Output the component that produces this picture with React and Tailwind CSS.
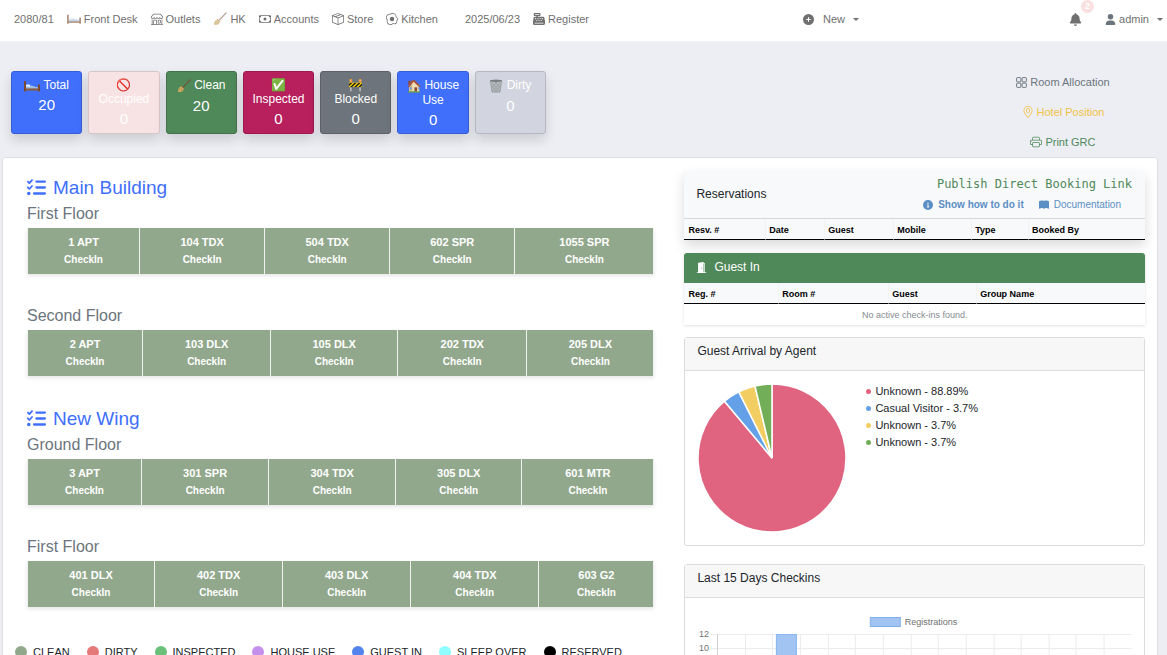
import {
  BsBookFill,
  BsBoxSeam,
  BsCash,
  BsDoorOpenFill,
  BsEggFried,
  BsGeoAlt,
  BsPrinter,
  BsShop,
} from 'react-icons/bs'
import { FaBell, FaCashRegister, FaCircleInfo, FaCirclePlus, FaListCheck, FaUser } from 'react-icons/fa6'

function BedIcon({ className }) {
  return (
    <svg viewBox="0 0 32 24" className={className} aria-hidden="true">
      <path d="M4 11h10l14 4v3H4z" fill="#a9c8ea" />
      <path d="M4 10q5-3 8 0v3H4z" fill="#e6ebf1" />
      <path d="M3 15h26v3H3z" fill="#8fb1d8" />
      <path d="M2 17h28v4H2z" fill="#8a5a3c" />
      <path d="M0 2h4v21H0zM28 9h4v14h-4z" fill="#7b4a33" />
    </svg>
  )
}

function BroomIcon({ className }) {
  return (
    <svg viewBox="0 0 32 32" className={className} aria-hidden="true">
      <path d="M30 2 15 18" stroke="#7a5136" strokeWidth="2.4" strokeLinecap="round" />
      <path d="m10 16 6 6-3 6q-5 3-11 1 0-6 3-9z" fill="#d3b064" />
      <path d="m7 20-3 7M11 21l-3 7M13 24l-2 4" stroke="#94703a" strokeWidth="1.1" />
      <path d="m10 16 6 6" stroke="#8a5a2c" strokeWidth="2" />
    </svg>
  )
}

function HouseIcon({ className }) {
  return (
    <svg viewBox="0 0 32 32" className={className} aria-hidden="true">
      <path d="M3 4h5v9H3z" fill="#8f4a35" />
      <path d="M5 14 12 4l16 9v16H5z" fill="#f1dfb8" />
      <path d="M5 14v15h7V8z" fill="#d9bd8b" />
      <path d="M2 17 12 2l6 1 13 14-3 2-13-13L5 19z" fill="#a5533c" />
      <path d="M17 19h6v10h-6z" fill="#8a4b2d" />
      <path d="M7 19h4v5H7zM25 19h2v5h-2z" fill="#5f9bd0" />
      <path d="M2 28h28v3H2z" fill="#6aa247" />
    </svg>
  )
}

function TrashIcon({ className }) {
  return (
    <svg viewBox="0 0 32 32" className={className} aria-hidden="true">
      <path d="M3 4h26l-4 26H7z" fill="#b6babd" />
      <path
        d="m6 8 18 20M5 15l13 14M12 5l14 15M26 8 8 28M27 15 14 29M20 5 6 20"
        stroke="#878d91"
        strokeWidth="1.2"
      />
      <path d="M3 4h26l-4 26H7z" fill="none" stroke="#8d9397" strokeWidth="1.6" />
      <ellipse cx="16" cy="4" rx="14" ry="2.6" fill="#777d81" />
    </svg>
  )
}

// four rounded squares, used for the allocation link
function GridIcon({ className }) {
  return (
    <svg viewBox="0 0 16 16" className={className} fill="none" stroke="currentColor" strokeWidth="1.4" aria-hidden="true">
      <rect x="0.9" y="0.9" width="6.2" height="6.2" rx="1" />
      <rect x="8.9" y="0.9" width="6.2" height="6.2" rx="1" />
      <rect x="0.9" y="8.9" width="6.2" height="6.2" rx="1" />
      <rect x="8.9" y="8.9" width="6.2" height="6.2" rx="1" />
    </svg>
  )
}

function Caret() {
  return <span className="ml-2 border-x-[3px] border-t-[3px] border-x-transparent border-t-current" />
}

const navItems = [
  { label: 'Front Desk', icon: <BedIcon className="w-3.5 h-3 opacity-60" /> },
  { label: 'Outlets', icon: <BsShop className="size-3" /> },
  { label: 'HK', icon: <BroomIcon className="size-3.5 opacity-60" /> },
  { label: 'Accounts', icon: <BsCash className="size-3" /> },
  { label: 'Store', icon: <BsBoxSeam className="size-3" /> },
  { label: 'Kitchen', icon: <BsEggFried className="size-3" /> },
]

const tiles = [
  { label: 'Total', count: 20, icon: <BedIcon className="inline w-4 h-3" />, color: 'bg-[#406ffb] border-[#365ed5]' },
  { label: 'Occupied', count: 0, icon: '🚫', color: 'bg-[#f8e3e4] border-[#d8c6c9]' },
  { label: 'Clean', count: 20, icon: <BroomIcon className="inline size-3.5" />, color: 'bg-[#4f8859] border-[#43734c]' },
  { label: 'Inspected', count: 0, icon: '✅', color: 'bg-[#b7205d] border-[#9b1b4f]' },
  { label: 'Blocked', count: 0, icon: '🚧', color: 'bg-[#6d747b] border-[#5c6268]' },
  { label: 'House Use', count: 0, icon: <HouseIcon className="inline size-3.5" />, color: 'bg-[#406ffb] border-[#365ed5]' },
  { label: 'Dirty', count: 0, icon: <TrashIcon className="inline size-3.5" />, color: 'bg-[#d2d5df] border-[#b6b8c1]' },
]

// span is the relative width of each room cell
const buildings = [
  {
    name: 'Main Building',
    floors: [
      {
        name: 'First Floor',
        rooms: [
          { name: '1 APT', span: 112 },
          { name: '104 TDX', span: 125 },
          { name: '504 TDX', span: 125 },
          { name: '602 SPR', span: 125 },
          { name: '1055 SPR', span: 139 },
        ],
      },
      {
        name: 'Second Floor',
        rooms: [
          { name: '2 APT', span: 115 },
          { name: '103 DLX', span: 128 },
          { name: '105 DLX', span: 127 },
          { name: '202 TDX', span: 129 },
          { name: '205 DLX', span: 127 },
        ],
      },
    ],
  },
  {
    name: 'New Wing',
    floors: [
      {
        name: 'Ground Floor',
        rooms: [
          { name: '3 APT', span: 114 },
          { name: '301 SPR', span: 127 },
          { name: '304 TDX', span: 127 },
          { name: '305 DLX', span: 126 },
          { name: '601 MTR', span: 132 },
        ],
      },
      {
        name: 'First Floor',
        rooms: [
          { name: '401 DLX', span: 127 },
          { name: '402 TDX', span: 128 },
          { name: '403 DLX', span: 128 },
          { name: '404 TDX', span: 128 },
          { name: '603 G2', span: 115 },
        ],
      },
    ],
  },
]

const statuses = [
  { label: 'CLEAN', color: 'bg-[#92a88d]' },
  { label: 'DIRTY', color: 'bg-[#e57878]' },
  { label: 'INSPECTED', color: 'bg-[#6abf7b]' },
  { label: 'HOUSE USE', color: 'bg-[#c490ec]' },
  { label: 'GUEST IN', color: 'bg-[#5383ec]' },
  { label: 'SLEEP OVER', color: 'bg-[#8ffdfe]' },
  { label: 'RESERVED', color: 'bg-black' },
]

const agents = [
  { label: 'Unknown', share: 88.89, fill: '#e06480', dot: 'bg-[#e06480]' },
  { label: 'Casual Visitor', share: 3.7, fill: '#64a0e8', dot: 'bg-[#64a0e8]' },
  { label: 'Unknown', share: 3.7, fill: '#f2cd61', dot: 'bg-[#f2cd61]' },
  { label: 'Unknown', share: 3.7, fill: '#72ae57', dot: 'bg-[#72ae57]' },
]

function Navbar() {
  return (
    <header className="bg-white pl-3.5 pr-1 pb-[3px] text-[11px] text-[#707070]">
      <div className="h-[38px] flex items-center">
        <nav className="flex items-center gap-[13px] flex-1">
          <a href="#year">2080/81</a>
          {navItems.map((item) => (
            <a key={item.label} href={`#${item.label}`} className="flex items-center gap-[3px]">
              {item.icon}
              {item.label}
            </a>
          ))}
          <a href="#date" className="ml-[14px]">2025/06/23</a>
          <a href="#register" className="flex items-center gap-[3px]">
            <FaCashRegister className="size-3" />
            Register
          </a>
        </nav>
        <button className="flex items-center mr-[210px]">
          <FaCirclePlus className="size-[11px] mr-[9px]" />
          New
          <Caret />
        </button>
        <button className="relative mr-[23px]" aria-label="Notifications">
          <FaBell className="size-[13px]" />
          <span className="absolute -top-[13px] left-3 size-[13px] rounded-full bg-[#f8dfe0] text-white text-[9px] font-bold leading-[13px]">
            2
          </span>
        </button>
        <button className="flex items-center">
          <FaUser className="size-[11px] mr-[3px] text-[#6c757d]" />
          admin
          <Caret />
        </button>
      </div>
    </header>
  )
}

function Tile({ tile }) {
  return (
    <div
      className={`h-[63px] rounded-[3px] border px-1.5 pt-1.5 text-center text-white shadow-[0_6px_12px_rgba(0,0,0,0.14)] ${tile.color}`}
    >
      <p className="text-[12px] leading-[14px]">
        {tile.icon} {tile.label}
      </p>
      <p className="text-[15px] leading-[18px] mt-1">{tile.count}</p>
    </div>
  )
}

function Floor({ floor }) {
  const total = floor.rooms.reduce((sum, room) => sum + room.span, 0)
  return (
    <section className="mb-[29px]">
      <h3 className="text-[16px] leading-[26px] text-[#6c757d] mb-px">{floor.name}</h3>
      <table className="w-full table-fixed border-collapse shadow-[0_2px_4px_rgba(0,0,0,0.1)]">
        <tbody>
          <tr>
            {floor.rooms.map((room) => (
              <td
                key={room.name}
                style={{ width: `${(room.span / total) * 100}%` }}
                className="h-[46px] p-0 border-x border-[#f0f3ef] bg-[#92a88d] text-center align-middle text-white font-bold"
              >
                <a href={`#${room.name}`} className="block">
                  <span className="block text-[11px] leading-[17px]">{room.name}</span>
                  <span className="block text-[10px] leading-[18px]">CheckIn</span>
                </a>
              </td>
            ))}
          </tr>
        </tbody>
      </table>
    </section>
  )
}

function HeadRow({ columns }) {
  return (
    <thead>
      <tr className="bg-[#f8f9fb]">
        {columns.map((col) => (
          <th
            key={col.label}
            style={{ width: `${(col.span / 461) * 100}%` }}
            className="h-[21px] p-0 pt-px pl-[3px] first:pl-1 border-b border-l first:border-l-0 border-l-[#f1f2f4] border-b-black text-left text-[9px] leading-3 font-bold text-black"
          >
            {col.label}
          </th>
        ))}
      </tr>
    </thead>
  )
}

function Panel({ title, children }) {
  return (
    <section className="border border-[#dcdcde] rounded-[3px] bg-white">
      <h4 className="h-[33px] pl-3 pt-1 bg-[#f7f7f7] border-b border-[#dcdcde] text-[12px] leading-[18px] text-[#212529]">
        {title}
      </h4>
      {children}
    </section>
  )
}

function point(share) {
  const angle = (share / 100) * 2 * Math.PI
  return `${75 + 74 * Math.sin(angle)} ${75 - 74 * Math.cos(angle)}`
}

function PieChart() {
  const total = agents.reduce((sum, agent) => sum + agent.share, 0)
  let start = 0
  return (
    <svg viewBox="0 0 150 150" className="size-[150px]" role="img" aria-label="Guest arrival by agent">
      {agents.map((agent, i) => {
        const share = (agent.share / total) * 100
        const end = Math.min(start + share, 99.999)
        const d = `M75 75 L${point(start)} A74 74 0 ${share > 50 ? 1 : 0} 1 ${point(end)} Z`
        start += share
        return <path key={i} d={d} fill={agent.fill} stroke="#fff" strokeWidth="1.5" strokeLinejoin="bevel" />
      })}
    </svg>
  )
}

function CheckinsChart() {
  const ticks = [12, 10, 8, 6, 4, 2, 0]
  return (
    <svg viewBox="0 0 435 120" className="w-full block" role="img" aria-label="Registrations per day">
      <rect x="173.5" y="4.5" width="30" height="9" fill="#a2c4f2" stroke="#7fb0ec" />
      <text x="208" y="12" fontSize="9" fill="#707070">Registrations</text>
      {ticks.map((tick, i) => (
        <g key={tick}>
          <path d={`M14 ${21.5 + i * 14}H435`} stroke="#ececec" />
          <text x="12" y={24 + i * 14} fontSize="9" textAnchor="end" fill="#707070">{tick}</text>
        </g>
      ))}
      {Array.from({ length: 15 }, (_, i) => (
        <path key={i} d={`M${Math.round(20 + i * 27.65) + 0.5} 21V112`} stroke={i === 0 ? '#d0d0d0' : '#ececec'} />
      ))}
      <path d="M79 21h21v84H79z" fill="#a2c4f2" />
      <path d="M79.5 105V21.5h20V105" fill="none" stroke="#8ab8f0" />
    </svg>
  )
}

function App() {
  return (
    <div className="min-h-screen bg-[#edeef4] font-['Liberation_Sans',Arial,sans-serif] text-[#212529]">
      <Navbar />

      <div className="flex pl-[11px] pt-[30px] pb-[7px] items-start justify-between">
        <div className="grid grid-cols-7 gap-1.5 w-[535px] max-w-full">
          {tiles.map((tile) => (
            <Tile key={tile.label} tile={tile} />
          ))}
        </div>
        <div className="w-[18%] pt-[3px] flex flex-col items-center gap-[14px] text-[11px] leading-4">
          <a href="#allocation" className="flex items-center gap-[3px] text-[#6c757d]">
            <GridIcon className="size-[11px]" />
            Room Allocation
          </a>
          <a href="#position" className="flex items-center gap-[3px] text-[#f0c243]">
            <BsGeoAlt className="size-3" />
            Hotel Position
          </a>
          <a href="#grc" className="flex items-center gap-[3px] text-[#4f8859]">
            <BsPrinter className="size-3" />
            Print GRC
          </a>
        </div>
      </div>

      <main className="ml-0.5 mr-[9px] bg-white border border-[#dddfe3] rounded-[3px] pl-6 pr-3 pb-6 flex">
        <div className="w-[628px] grow-[3] shrink pt-4">
          {buildings.map((building) => (
            <div key={building.name}>
              <h2 className="flex items-center gap-[7px] text-[19px] leading-[27px] text-[#406ffb]">
                <FaListCheck className="size-[19px]" />
                {building.name}
              </h2>
              {building.floors.map((floor) => (
                <Floor key={floor.name} floor={floor} />
              ))}
            </div>
          ))}

          <ul className="-ml-3 pt-2 flex gap-[17px] text-[11px] leading-4 whitespace-nowrap">
            {statuses.map((status) => (
              <li key={status.label} className="flex items-center gap-1.5">
                <span className={`size-3 rounded-full ${status.color}`} />
                {status.label}
              </li>
            ))}
          </ul>
        </div>

        <div className="w-[461px] grow-[2] shrink ml-[30px] pt-[13px]">
          <section className="shadow-[0_6px_12px_rgba(0,0,0,0.14)]">
            <div className="h-12 pl-3 pr-[13px] bg-[#f8f9fb] border-b border-[#d6d8db] flex items-center justify-between">
              <h4 className="pb-0.5 text-[12px]">Reservations</h4>
              <div className="flex flex-col items-end pb-0.5">
                <a href="#publish" className="font-['DejaVu_Sans_Mono',monospace] text-[12px] leading-[22px] text-[#4f8859]">
                  Publish Direct Booking Link
                </a>
                <div className="flex items-center gap-[15px] pr-[11px] text-[10px] leading-5 text-[#5b8fc4]">
                  <a href="#how-to" className="flex items-center gap-[5px] font-bold">
                    <FaCircleInfo className="size-2.5" />
                    Show how to do it
                  </a>
                  <a href="#docs" className="flex items-center gap-[5px]">
                    <BsBookFill className="size-2.5" />
                    Documentation
                  </a>
                </div>
              </div>
            </div>
            <table className="w-full table-fixed border-separate border-spacing-0">
              <HeadRow
                columns={[
                  { label: 'Resv. #', span: 81 },
                  { label: 'Date', span: 59 },
                  { label: 'Guest', span: 69 },
                  { label: 'Mobile', span: 78 },
                  { label: 'Type', span: 57 },
                  { label: 'Booked By', span: 117 },
                ]}
              />
            </table>
          </section>

          <section className="mt-[13px] mb-3 shadow-[0_1px_3px_rgba(0,0,0,0.12)]">
            <h4 className="h-[30px] pl-3 pb-0.5 rounded-t-[3px] bg-[#4f8859] flex items-center gap-[7px] text-[12px] text-white">
              <BsDoorOpenFill className="size-[11px]" />
              Guest In
            </h4>
            <table className="w-full table-fixed border-separate border-spacing-0">
              <HeadRow
                columns={[
                  { label: 'Reg. #', span: 94 },
                  { label: 'Room #', span: 110 },
                  { label: 'Guest', span: 88 },
                  { label: 'Group Name', span: 169 },
                ]}
              />
              <tbody>
                <tr>
                  <td colSpan={4} className="h-[21px] p-0 text-center text-[9px] leading-3 text-[#858b90]">
                    No active check-ins found.
                  </td>
                </tr>
              </tbody>
            </table>
          </section>

          <Panel title="Guest Arrival by Agent">
            <div className="flex pl-3 pt-3 pb-3 gap-[19px]">
              <PieChart />
              <ul className="text-[11px] leading-[17px]">
                {agents.map((agent, i) => (
                  <li key={i} className="flex items-center gap-1">
                    <span className={`size-[5px] rounded-full ${agent.dot}`} />
                    {agent.label} - {agent.share}%
                  </li>
                ))}
              </ul>
            </div>
          </Panel>

          <div className="mt-[18px]">
            <Panel title="Last 15 Days Checkins">
              <div className="px-3 pt-[15px]">
                <CheckinsChart />
              </div>
            </Panel>
          </div>
        </div>
      </main>
    </div>
  )
}

export default App
